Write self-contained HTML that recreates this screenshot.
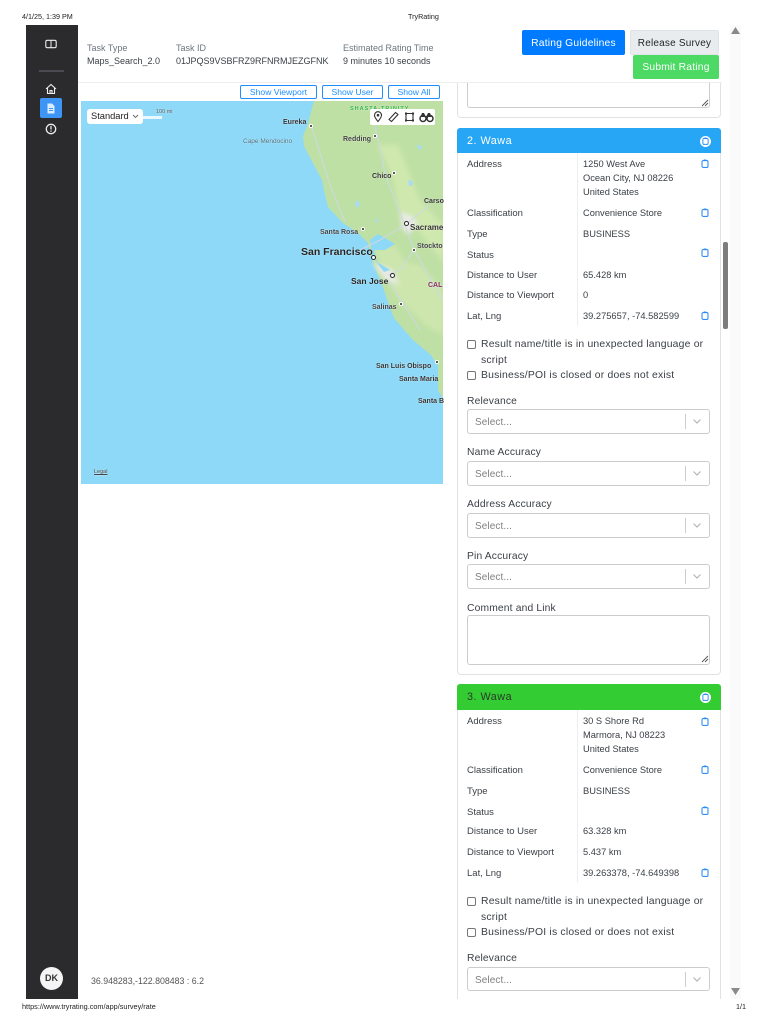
<!DOCTYPE html>
<html><head><meta charset="utf-8"><title>TryRating</title>
<style>
html,body{margin:0;padding:0;background:#fff;width:768px;height:1024px;overflow:hidden}
body{position:relative;font-family:"Liberation Sans",sans-serif;color:#343a40}
.t{position:absolute;white-space:nowrap;font-size:10px;line-height:14px;color:#3a3f45}
.h{position:absolute;white-space:nowrap;font-size:9px;line-height:14px;color:#3a3f45}
.b{position:absolute;box-sizing:border-box}
.sv{position:absolute;overflow:visible}
.btn{position:absolute;box-sizing:border-box;border-radius:2px;text-align:center;font-size:10.3px;letter-spacing:.2px}
.sb{position:absolute;box-sizing:border-box;border:1px solid #1f8fff;border-radius:2px;height:14px;top:85px;color:#1f8fff;font-size:8.6px;line-height:13px;text-align:center;background:#fff}
.sel{position:absolute;left:467px;width:243px;height:25px;box-sizing:border-box;border:1px solid #ccc;border-radius:3px;background:#fff}
.sel span{position:absolute;left:7px;top:6px;font-size:10px;line-height:14px;color:#808080;letter-spacing:.1px}
.sel i{position:absolute;left:217px;top:4px;width:1px;height:15px;background:#ccc}
.sel svg{position:absolute;left:224px;top:8px}
.cb{position:absolute;left:467px;width:9px;height:9px;box-sizing:border-box;border:1px solid #767676;border-radius:2px;background:#fff}
.l{position:absolute;left:467px;margin-top:2px;white-space:nowrap;font-size:10.3px;line-height:14px;color:#3a3f45;letter-spacing:.15px}
.r{position:absolute;left:467px;margin-top:2px;white-space:nowrap;font-size:9.5px;line-height:14px;color:#3a3f45}
.v{position:absolute;left:583px;margin-top:1px;white-space:nowrap;font-size:9.3px;line-height:14px;color:#3a3f45}
.ck{position:absolute;left:481px;margin-top:2px;white-space:nowrap;font-size:10.4px;line-height:14px;color:#3a3f45;letter-spacing:.2px}
.m{position:absolute;white-space:nowrap;font-size:7px;line-height:9px;color:#333;font-weight:bold;text-shadow:0 0 1px #fff}
.d{position:absolute;width:2px;height:2px;border-radius:50%;background:#222;border:1px solid #fff}
.o{position:absolute;width:3px;height:3px;border-radius:50%;background:#fff;border:1.5px solid #222}
.ttl{position:absolute;left:467px;white-space:nowrap;font-size:10.8px;line-height:14px;letter-spacing:.5px}
</style></head><body>

<svg width="0" height="0" style="position:absolute"><defs>
<symbol id="clip" viewBox="0 0 8 9"><rect x="1" y="1.600" width="6" height="6.800" rx="1.200" fill="none" stroke="#2f8df5" stroke-width="1.100"/><rect x="2.600" y=".5" width="2.800" height="1.600" rx=".5" fill="#2f8df5"/></symbol>
<symbol id="chev" viewBox="0 0 10 7"><path d="M1.500 1.500 5 5l3.500-3.500" fill="none" stroke="#b5b5b5" stroke-width="1.200"/></symbol>
<filter id="bl" x="-10%" y="-10%" width="120%" height="120%"><feGaussianBlur stdDeviation="2.500"/></filter>
<filter id="bs"><feGaussianBlur stdDeviation=".35"/></filter>
</defs></svg>

<div class="t" style="left:22px;top:12px;font-size:7.200px;line-height:9px;color:#222">4/1/25, 1:39 PM</div>
<div class="t" style="left:408px;top:12px;font-size:7.200px;line-height:9px;color:#222">TryRating</div>

<!-- sidebar -->
<div class="b" style="left:26px;top:25px;width:52px;height:974px;background:#2b2a2d"></div>
<svg class="sv" style="left:45px;top:39px" width="12" height="10" viewBox="0 0 12 10"><rect x=".8" y="1.300" width="10.400" height="7.400" rx="1.500" fill="none" stroke="#eee" stroke-width="1.100"/><path d="M6 1.500v7" stroke="#eee" stroke-width="1"/></svg>
<div class="b" style="left:39px;top:70px;width:25px;height:2px;background:#4a4a52"></div>
<svg class="sv" style="left:45px;top:83px" width="12" height="12" viewBox="0 0 12 12"><path d="M1 6 6 1.500 11 6M2.500 5v5.500h7V5M5 10.500V7.500h2v3" fill="none" stroke="#eee" stroke-width="1.100"/></svg>
<div class="b" style="left:40px;top:98px;width:22px;height:20px;background:#3d95f5;border-radius:2px"></div>
<svg class="sv" style="left:46px;top:103px" width="10" height="11" viewBox="0 0 10 11"><path d="M1.500.5h4.500l2.500 2.500v7.500h-7z" fill="#dcecff"/><path d="M3 5.500h4M3 7.500h4" stroke="#3d95f5" stroke-width=".9"/></svg>
<svg class="sv" style="left:45px;top:123px" width="12" height="12" viewBox="0 0 12 12"><circle cx="6" cy="6" r="4.700" fill="none" stroke="#eee" stroke-width="1.300"/><rect x="5.400" y="3" width="1.200" height="3.600" fill="#eee"/><rect x="5.400" y="7.500" width="1.200" height="1.300" fill="#eee"/></svg>
<div class="b" style="left:40px;top:967px;width:23px;height:23px;border-radius:50%;background:#f5f5f5;color:#333;font-size:9px;font-weight:bold;text-align:center;line-height:22px">DK</div>

<!-- header -->
<div class="h" style="left:87px;top:41px;color:#6c757d">Task Type</div>
<div class="h" style="left:87px;top:54px">Maps_Search_2.0</div>
<div class="h" style="left:176px;top:41px;color:#6c757d">Task ID</div>
<div class="h" style="left:176px;top:54px">01JPQS9VSBFRZ9RFNRMJEZGFNK</div>
<div class="h" style="left:343px;top:41px;color:#6c757d">Estimated Rating Time</div>
<div class="h" style="left:343px;top:54px">9 minutes 10 seconds</div>
<div class="b" style="left:78px;top:82px;width:644px;height:1px;background:#eee"></div>
<div class="btn" style="left:522px;top:30px;width:103px;height:25px;background:#007bff;color:#fff;line-height:27px">Rating Guidelines</div>
<div class="btn" style="left:630px;top:30px;width:89px;height:25px;background:#e9ecef;color:#212529;line-height:25px;border:1px solid #dfe3e7;font-size:10px">Release Survey</div>
<div class="btn" style="left:633px;top:55px;width:86px;height:24px;background:#4cd964;color:#fff;line-height:26px">Submit Rating</div>

<div class="sb" style="left:240px;width:77px">Show Viewport</div>
<div class="sb" style="left:322px;width:61px">Show User</div>
<div class="sb" style="left:388px;width:52px">Show All</div>

<!-- map -->
<svg class="sv" style="left:81px;top:101px;overflow:hidden" width="362" height="383" viewBox="81 101 362 383">
<rect x="81" y="101" width="362" height="383" fill="#8dd9f7"/>
<path d="M314 101 311 112 308 124 303 136 304 146 313 163 322 180 325 195 328 207 343 223 358 233 368 243 371 256 375 268 383 287 389 305 394 318 413 340 431 355 438 366 438 390 443 398V101Z" fill="#bfe0a4" filter="url(#bs)"/>
<g filter="url(#bl)">
<path d="M375 250 395 245 405 262 420 265 443 290V335L425 325 400 300 390 285Z" fill="#cde6ad"/>
<path d="M378 145 392 175 400 215 414 225 443 262V225L420 200 398 145Z" fill="#cfe8ae"/>
<path d="M400 212 412 216 418 225 408 235 402 228Z" fill="#e8eae4"/>
<path d="M372 262 392 270 400 285 385 280Z" fill="#e8eae4"/>
</g>
<path d="M370 240 378 234 395 244 385 250 374 250 377 262 390 270 384 272 372 256Z" fill="#8dd9f7" filter="url(#bs)"/>
<path d="M373 120 381 150 385 175 405 225 414 250 442 300M405 225 380 240 360 250M311 125 330 185 345 222M405 225 430 205M414 250 400 270 388 275M388 280 420 330" fill="none" stroke="#cdd9e6" stroke-width="1" filter="url(#bs)"/>
<path d="M417 145h4l1 4h-4zM408 180l5 1-1 5h-3zM356 200l4 3-1 4h-4zM375 218l4 3-3 2z" fill="#a9dcef" filter="url(#bs)"/>
<rect x="141" y="116" width="21" height="3" fill="#fff" opacity=".8"/>
</svg>

<div class="m" style="left:156px;top:108px;font-size:5.500px;font-weight:normal;color:#555">100 mi</div>
<div class="m" style="left:350px;top:105px;font-size:5.500px;color:#2fb44a;letter-spacing:1px">SHASTA-TRINITY</div>
<div class="m" style="left:283px;top:118px">Eureka</div><div class="d" style="left:309px;top:124px"></div>
<div class="m" style="left:243px;top:137px;font-size:6.500px;color:#4a6f80;font-weight:normal">Cape Mendocino</div>
<div class="m" style="left:343px;top:135px;color:#444">Redding</div><div class="d" style="left:373px;top:134px"></div>
<div class="m" style="left:372px;top:172px">Chico</div><div class="d" style="left:392px;top:171px"></div>
<div class="m" style="left:424px;top:197px">Carso</div>
<div class="m" style="left:320px;top:228px;color:#444">Santa Rosa</div><div class="d" style="left:361px;top:227px"></div>
<div class="m" style="left:410px;top:223px;font-size:8px">Sacrame</div><div class="o" style="left:404px;top:221px"></div>
<div class="m" style="left:417px;top:242px;color:#444">Stockto</div><div class="d" style="left:412px;top:248px"></div>
<div class="m" style="left:301px;top:246px;font-size:10.500px;line-height:12px;color:#222">San Francisco</div><div class="o" style="left:371px;top:255px"></div>
<div class="m" style="left:351px;top:276px;font-size:8.500px;line-height:10px;color:#222">San Jose</div><div class="o" style="left:390px;top:273px"></div>
<div class="m" style="left:428px;top:281px;color:#8a2a6a">CAL</div>
<div class="m" style="left:372px;top:303px;color:#444">Salinas</div><div class="d" style="left:399px;top:302px"></div>
<div class="m" style="left:376px;top:362px">San Luis Obispo</div><div class="d" style="left:435px;top:360px"></div>
<div class="m" style="left:399px;top:375px">Santa Maria</div>
<div class="m" style="left:418px;top:397px">Santa B</div>
<div class="m" style="left:94px;top:468px;font-size:5.500px;font-weight:normal;text-decoration:underline;color:#444">Legal</div>

<div class="b" style="left:87px;top:109px;width:56px;height:15px;background:#fff;border-radius:3px;font-size:9.300px;line-height:15px;padding-left:4px;color:#222">Standard</div>
<svg class="sv" style="left:132px;top:114px" width="7" height="5" viewBox="0 0 7 5"><path d="M1 1 3.500 3.500 6 1" fill="none" stroke="#666" stroke-width=".9"/></svg>
<div class="b" style="left:370px;top:109px;width:65px;height:16px;background:#fff;border-radius:2px"></div>
<svg class="sv" style="left:370px;top:109px" width="65" height="16" viewBox="0 0 65 16">
<path d="M8 12.500C5.500 9.500 4.500 8 4.500 6.200a3.500 3.500 0 0 1 7 0C11.500 8 10.500 9.500 8 12.500Z" fill="none" stroke="#333" stroke-width="1.100"/><circle cx="8" cy="6.200" r="1.300" fill="#333"/>
<path d="M19 10.500 25.500 3.500 28 5.500 21.500 12.500Z" fill="none" stroke="#333" stroke-width="1.100"/>
<path d="M36 4.500h7v7h-7z" fill="none" stroke="#333" stroke-width="1.100"/><rect x="35" y="3.500" width="2" height="2" fill="#333"/><rect x="42" y="3.500" width="2" height="2" fill="#333"/><rect x="35" y="10.500" width="2" height="2" fill="#333"/><rect x="42" y="10.500" width="2" height="2" fill="#333"/>
<circle cx="53" cy="9.500" r="3" fill="none" stroke="#333" stroke-width="1.500"/><circle cx="60" cy="9.500" r="3" fill="none" stroke="#333" stroke-width="1.500"/><path d="M50.500 8 52 4h2l1.500 3h1l1.500-3h2l1.500 4" fill="#333"/>
</svg>

<div class="t" style="left:91px;top:974px;font-size:8.800px;color:#555">36.948283,-122.808483 : 6.2</div>

<!-- right column: card 1 remainder -->
<div class="b" style="left:457px;top:83px;width:264px;height:35px;border:1px solid #e2e2e2;border-top:0;border-radius:0 0 4px 4px"></div>
<div class="b" style="left:467px;top:83px;width:243px;height:25px;border:1px solid #ccc;border-top:0;border-radius:0 0 3px 3px"></div>
<svg class="sv" style="left:701px;top:99px" width="8" height="8" viewBox="0 0 8 8"><path d="M7 1 1 7M7 4 4 7" stroke="#555" stroke-width=".9"/></svg>

<!-- card 2 -->
<div class="b" style="left:457px;top:128px;width:264px;height:547px;border:1px solid #e2e2e2;border-radius:4px"></div>
<div class="b" style="left:457px;top:128px;width:264px;height:25px;background:#26a6f5;border-radius:3px 3px 0 0"></div>
<div class="ttl" style="top:134px;color:#fff">2. Wawa</div>
<div class="b" style="left:700px;top:136px;width:11px;height:11px;border-radius:50%;background:#fff"></div>
<svg class="sv" style="left:702px;top:137px" width="7" height="8"><use href="#clip"/></svg>
<div class="b" style="left:577px;top:153px;width:1px;height:173px;background:#eee"></div>

<div class="r" style="top:156px">Address</div>
<div class="v" style="top:156px">1250 West Ave</div>
<div class="v" style="top:170px">Ocean City, NJ 08226</div>
<div class="v" style="top:184px">United States</div>
<div class="r" style="top:205px">Classification</div><div class="v" style="top:205px">Convenience Store</div>
<div class="r" style="top:226px">Type</div><div class="v" style="top:226px">BUSINESS</div>
<div class="r" style="top:247px">Status</div>
<div class="r" style="top:267px">Distance to User</div><div class="v" style="top:267px">65.428 km</div>
<div class="r" style="top:287px">Distance to Viewport</div><div class="v" style="top:287px">0</div>
<div class="r" style="top:308px">Lat, Lng</div><div class="v" style="top:308px">39.275657, -74.582599</div>
<svg class="sv" style="left:701px;top:159px" width="8" height="9"><use href="#clip"/></svg>
<svg class="sv" style="left:701px;top:208px" width="8" height="9"><use href="#clip"/></svg>
<svg class="sv" style="left:701px;top:248px" width="8" height="9"><use href="#clip"/></svg>
<svg class="sv" style="left:701px;top:311px" width="8" height="9"><use href="#clip"/></svg>

<div class="cb" style="top:340px"></div>
<div class="ck" style="top:336px">Result name/title is in unexpected language or</div>
<div class="ck" style="top:352px">script</div>
<div class="cb" style="top:371px"></div>
<div class="ck" style="top:367px">Business/POI is closed or does not exist</div>

<div class="l" style="top:393px">Relevance</div>
<div class="sel" style="top:409px"><span>Select...</span><i></i><svg width="10" height="7"><use href="#chev"/></svg></div>
<div class="l" style="top:444px">Name Accuracy</div>
<div class="sel" style="top:461px"><span>Select...</span><i></i><svg width="10" height="7"><use href="#chev"/></svg></div>
<div class="l" style="top:496px">Address Accuracy</div>
<div class="sel" style="top:513px"><span>Select...</span><i></i><svg width="10" height="7"><use href="#chev"/></svg></div>
<div class="l" style="top:548px">Pin Accuracy</div>
<div class="sel" style="top:564px"><span>Select...</span><i></i><svg width="10" height="7"><use href="#chev"/></svg></div>
<div class="l" style="top:600px">Comment and Link</div>
<div class="b" style="left:467px;top:615px;width:243px;height:50px;border:1px solid #ccc;border-radius:3px"></div>
<svg class="sv" style="left:701px;top:655px" width="8" height="8" viewBox="0 0 8 8"><path d="M7 1 1 7M7 4 4 7" stroke="#555" stroke-width=".9"/></svg>

<!-- card 3 -->
<div class="b" style="left:457px;top:684px;width:264px;height:316px;border:1px solid #e2e2e2;border-bottom:0;border-radius:4px 4px 0 0"></div>
<div class="b" style="left:457px;top:684px;width:264px;height:26px;background:#33cc33;border-radius:3px 3px 0 0"></div>
<div class="ttl" style="top:690px;color:#2b3a2b">3. Wawa</div>
<div class="b" style="left:700px;top:692px;width:11px;height:11px;border-radius:50%;background:#fff"></div>
<svg class="sv" style="left:702px;top:693px" width="7" height="8"><use href="#clip"/></svg>
<div class="b" style="left:577px;top:710px;width:1px;height:173px;background:#eee"></div>

<div class="r" style="top:713px">Address</div>
<div class="v" style="top:713px">30 S Shore Rd</div>
<div class="v" style="top:727px">Marmora, NJ 08223</div>
<div class="v" style="top:741px">United States</div>
<div class="r" style="top:762px">Classification</div><div class="v" style="top:762px">Convenience Store</div>
<div class="r" style="top:783px">Type</div><div class="v" style="top:783px">BUSINESS</div>
<div class="r" style="top:804px">Status</div>
<div class="r" style="top:823px">Distance to User</div><div class="v" style="top:823px">63.328 km</div>
<div class="r" style="top:844px">Distance to Viewport</div><div class="v" style="top:844px">5.437 km</div>
<div class="r" style="top:865px">Lat, Lng</div><div class="v" style="top:865px">39.263378, -74.649398</div>
<svg class="sv" style="left:701px;top:717px" width="8" height="9"><use href="#clip"/></svg>
<svg class="sv" style="left:701px;top:765px" width="8" height="9"><use href="#clip"/></svg>
<svg class="sv" style="left:701px;top:806px" width="8" height="9"><use href="#clip"/></svg>
<svg class="sv" style="left:701px;top:868px" width="8" height="9"><use href="#clip"/></svg>

<div class="cb" style="top:897px"></div>
<div class="ck" style="top:893px">Result name/title is in unexpected language or</div>
<div class="ck" style="top:909px">script</div>
<div class="cb" style="top:928px"></div>
<div class="ck" style="top:924px">Business/POI is closed or does not exist</div>
<div class="l" style="top:950px">Relevance</div>
<div class="sel" style="top:967px;height:24px"><span>Select...</span><i></i><svg width="10" height="7"><use href="#chev"/></svg></div>
<div class="b" style="left:457px;top:999px;width:264px;height:25px;background:#fff"></div>

<!-- scrollbar -->
<div class="b" style="left:730px;top:25px;width:11px;height:974px;background:#fafafa"></div>
<svg class="sv" style="left:731px;top:27px" width="9" height="7"><path d="M0 7 4.500 0 9 7Z" fill="#8a8a8a"/></svg>
<svg class="sv" style="left:731px;top:988px" width="9" height="7"><path d="M0 0 4.500 7 9 0Z" fill="#8a8a8a"/></svg>
<div class="b" style="left:723px;top:242px;width:5px;height:87px;background:#7d7d7d;border-radius:2px"></div>

<div class="t" style="left:22px;top:1002px;font-size:7.300px;line-height:9px;color:#222">https://www.tryrating.com/app/survey/rate</div>
<div class="t" style="left:736px;top:1002px;font-size:7.200px;line-height:9px;color:#222">1/1</div>
</body></html>
